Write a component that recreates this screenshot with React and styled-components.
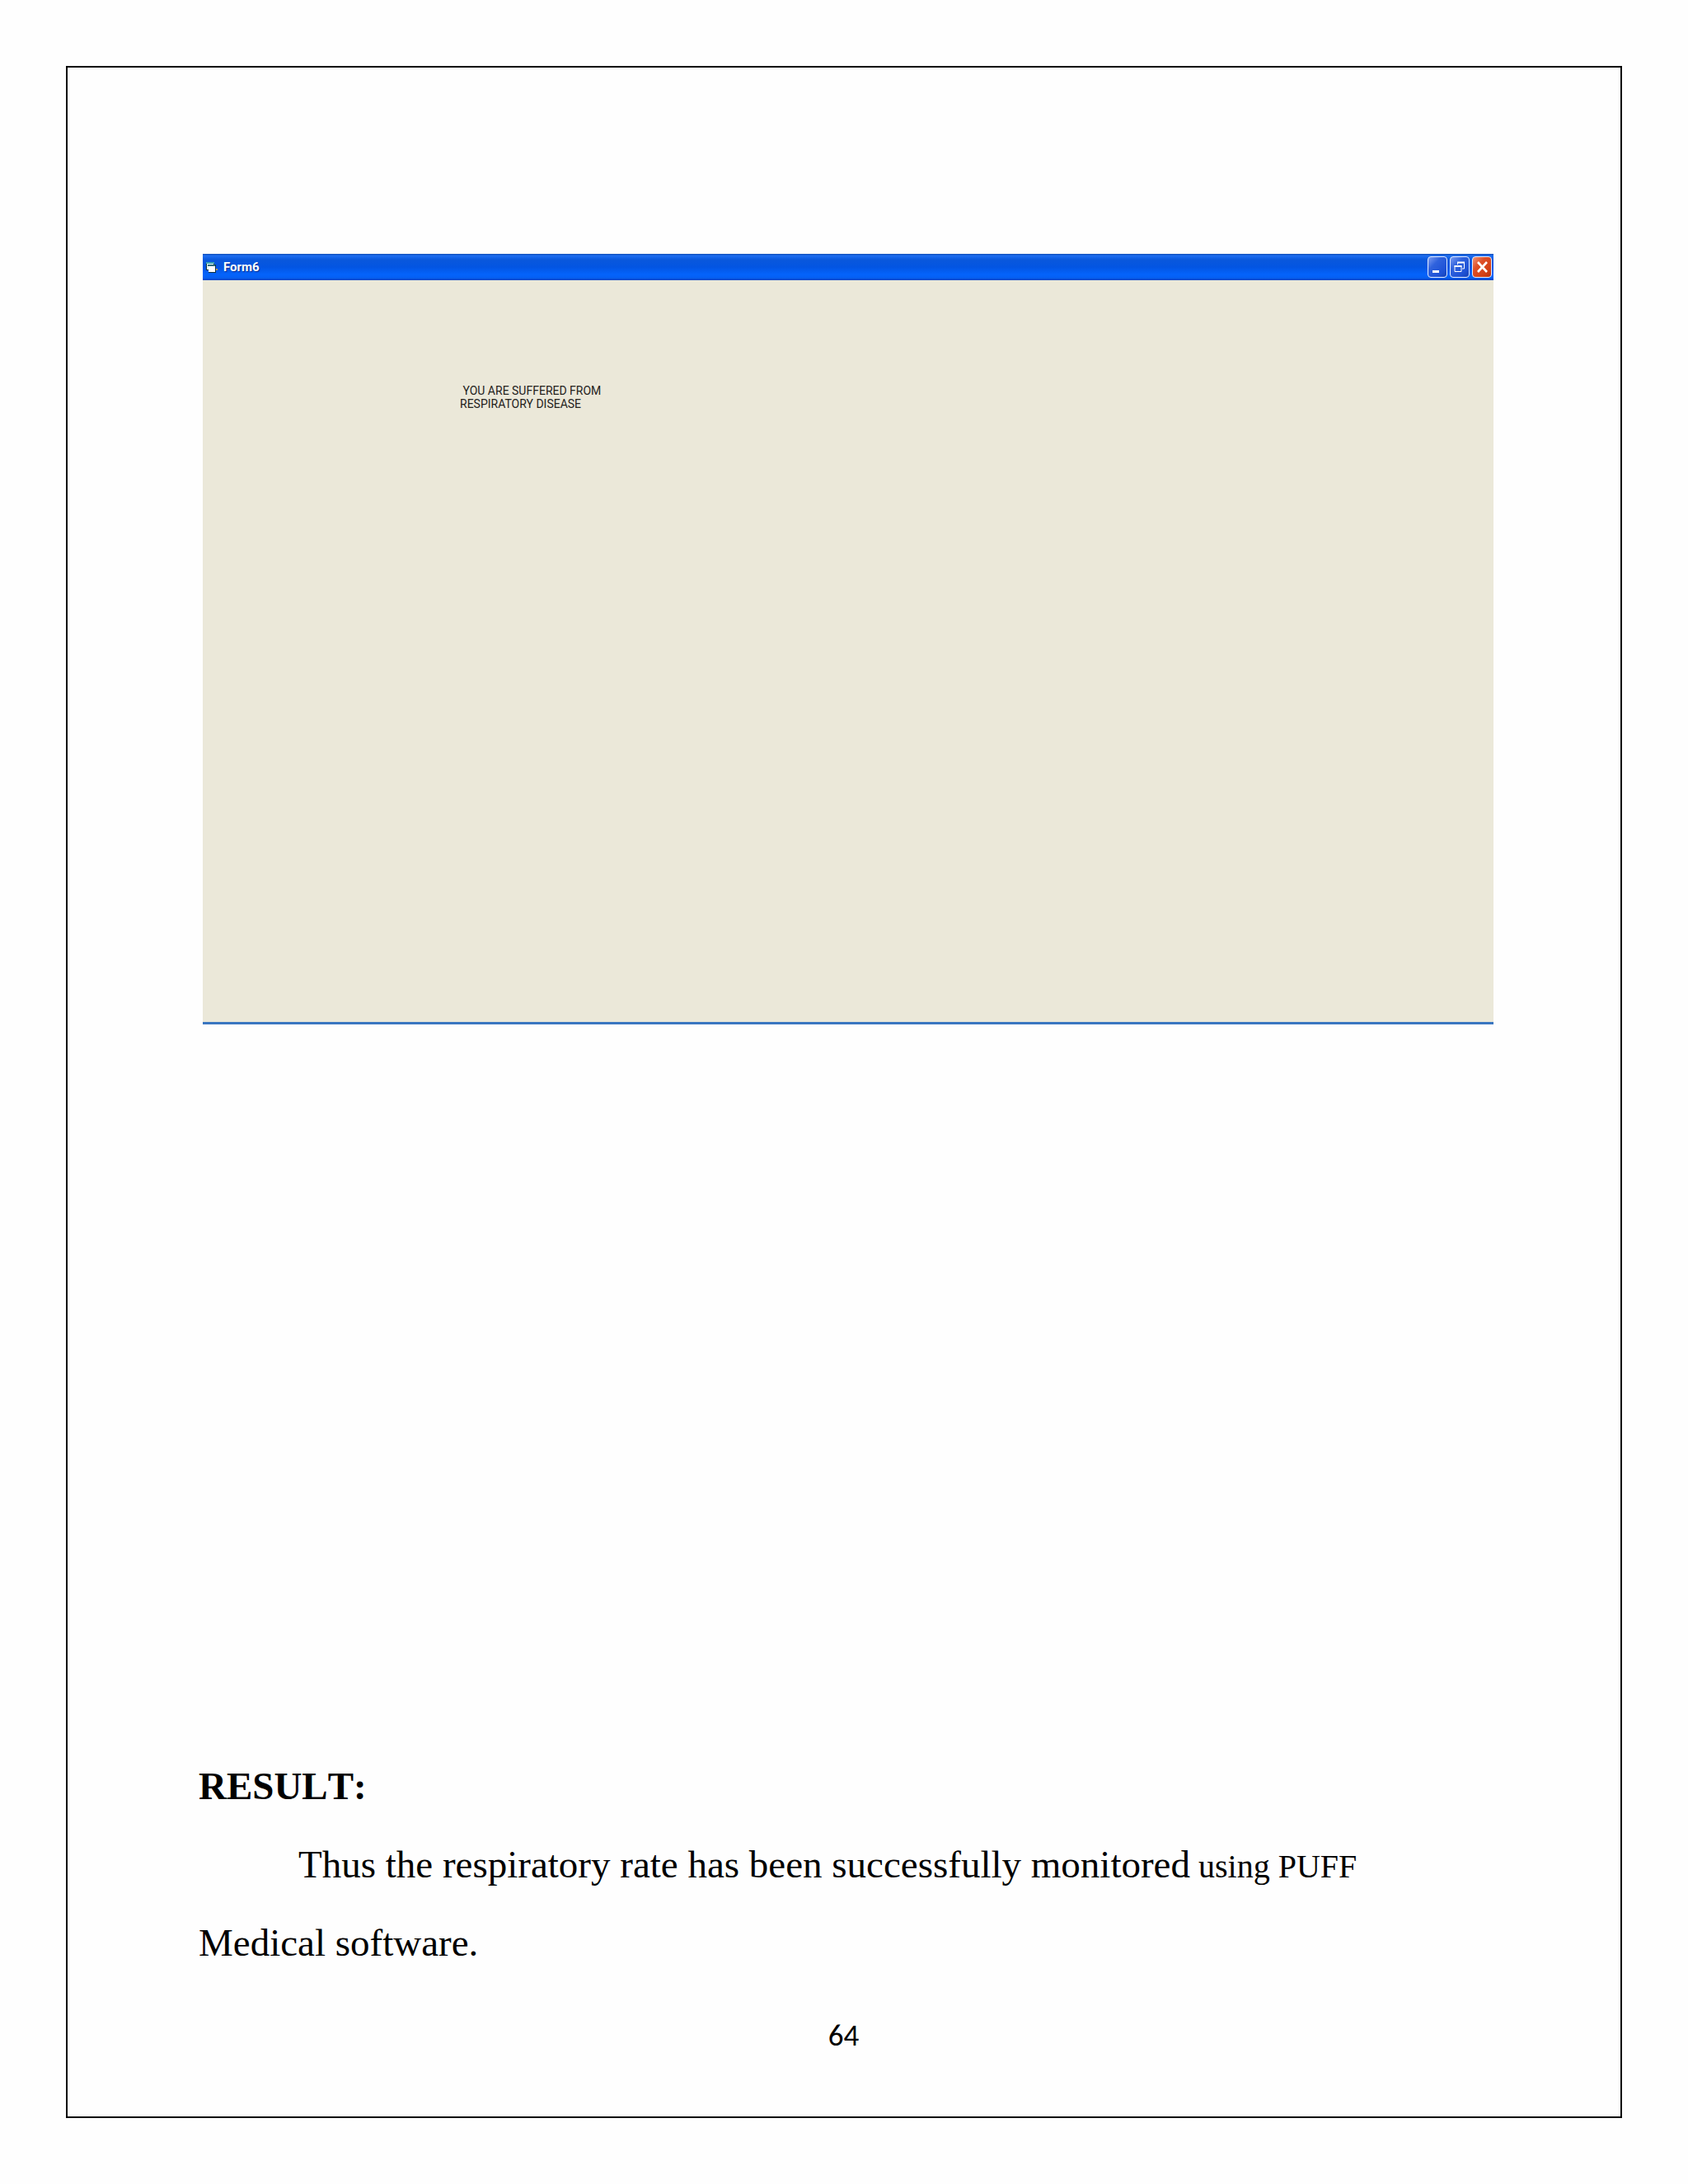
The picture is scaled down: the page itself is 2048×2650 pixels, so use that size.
import React from "react";
import styled, { createGlobalStyle } from "styled-components";

const GlobalStyle = createGlobalStyle`
  *, *::before, *::after { box-sizing: border-box; }
  body { margin: 0; background: #fefefe; color: #000; }
`;

const Sheet = styled.main`
  margin: 80px;
  padding: 226px 154px 76px 159px;
  border: 2px solid #000;
  font-family: "Liberation Serif", "Times New Roman", serif;
`;

const FormWindow = styled.section`
  margin: 0 0 0 5px;
  border-bottom: 3px solid #3a76c0;
  background: #ebe8d9;
  font-family: Roboto, "Liberation Sans", sans-serif;
`;

const TitleBar = styled.header`
  display: flex;
  align-items: center;
  gap: 7px;
  height: 32px;
  padding: 0 2px 0 4px;
  background: linear-gradient(
    #1450b8 0%,
    #1c6cf0 8%,
    #0a58dc 22%,
    #0355e2 50%,
    #0463fb 78%,
    #0560f4 90%,
    #0445c4 100%
  );
`;

const Title = styled.h1`
  flex: 1;
  margin: 0;
  color: #fff;
  font-size: 15px;
  line-height: 20px;
  font-weight: 700;
  text-shadow: 1px 1px 1px #0a2f92;
`;

const Controls = styled.div`
  display: flex;
  gap: 3px;
`;

const ControlButton = styled.button`
  display: grid;
  place-items: center;
  width: 24px;
  height: 26px;
  padding: 0;
  border: 1px solid #e4ecff;
  border-radius: 4px;
  background: ${({ $close }) =>
    $close
      ? "linear-gradient(135deg, #ee9478 0%, #dd4f28 35%, #d24015 75%, #b5330e 100%)"
      : "linear-gradient(135deg, #7d9df2 0%, #2f62dd 35%, #1e52d6 75%, #1742b4 100%)"};
`;

const FormBody = styled.div`
  min-height: 900px;
  padding: 126px 312px;
`;

const Message = styled.p`
  margin: 0;
  color: #24221c;
  font-size: 14px;
  line-height: 16px;
  white-space: pre;
`;

const Report = styled.section`
  margin-top: 877px;
  font-size: 47px;
  line-height: 95px;
  font-kerning: none;
`;

const Heading = styled.h2`
  margin: 0;
  font-size: inherit;
  font-weight: 700;
`;

const Paragraph = styled.p`
  margin: 0;
  text-indent: 121px;
`;

const Small = styled.span`
  font-size: 40px;
  line-height: 1;
`;

const PageNumber = styled.footer`
  margin-top: 43px;
  padding-right: 6px;
  font-family: Carlito, Lato, sans-serif;
  font-size: 37px;
  line-height: 44px;
  text-align: center;
`;

const FormIcon = () => (
  <svg width="14" height="14" viewBox="0 0 14 14" aria-hidden="true">
    <path d="M0 1h10v3h2v10H3v-3H0z" fill="#12343f" />
    <path d="M0 1h10v2H0z" fill="#3fa3b4" />
    <path d="M1 3h8v7H1z" fill="#e4f5f4" />
    <path d="M3 5h8v8H3z" fill="#fff" />
    <path d="M2 4h9v2H2z" fill="#2b6d7c" />
    <path d="M12 9h2v2h-2z" fill="#b89a55" />
  </svg>
);

const MinimizeIcon = () => (
  <svg width="22" height="24" viewBox="0 0 22 24" aria-hidden="true">
    <path d="M5 16h8v3H5z" fill="#fff" />
  </svg>
);

const RestoreIcon = () => (
  <svg width="22" height="24" viewBox="0 0 22 24" aria-hidden="true">
    <g fill="none" stroke="#fff">
      <path d="M8.5 9V6.5h8V14H14" />
      <path d="M8 6.5h9" strokeWidth="2" />
      <path d="M5 10.5h8v7H5z" />
      <path d="M4.5 11h9" strokeWidth="2" />
    </g>
  </svg>
);

const CloseIcon = () => (
  <svg width="22" height="24" viewBox="0 0 22 24" aria-hidden="true">
    <path d="M6 6l11 12M17 6L6 18" stroke="#fff" strokeWidth="2.6" />
  </svg>
);

export default function App() {
  return (
    <>
      <GlobalStyle />
      <Sheet>
        <FormWindow aria-label="Form6">
          <TitleBar>
            <FormIcon />
            <Title>Form6</Title>
            <Controls>
              <ControlButton type="button" aria-label="Minimize">
                <MinimizeIcon />
              </ControlButton>
              <ControlButton type="button" aria-label="Restore">
                <RestoreIcon />
              </ControlButton>
              <ControlButton type="button" aria-label="Close" $close>
                <CloseIcon />
              </ControlButton>
            </Controls>
          </TitleBar>
          <FormBody>
            <Message>{" YOU ARE SUFFERED FROM\nRESPIRATORY DISEASE"}</Message>
          </FormBody>
        </FormWindow>
        <Report>
          <Heading>RESULT:</Heading>
          <Paragraph>
            Thus the respiratory rate has been successfully monitored
            <Small> using PUFF</Small>
            <br />
            Medical software.
          </Paragraph>
        </Report>
        <PageNumber>64</PageNumber>
      </Sheet>
    </>
  );
}
